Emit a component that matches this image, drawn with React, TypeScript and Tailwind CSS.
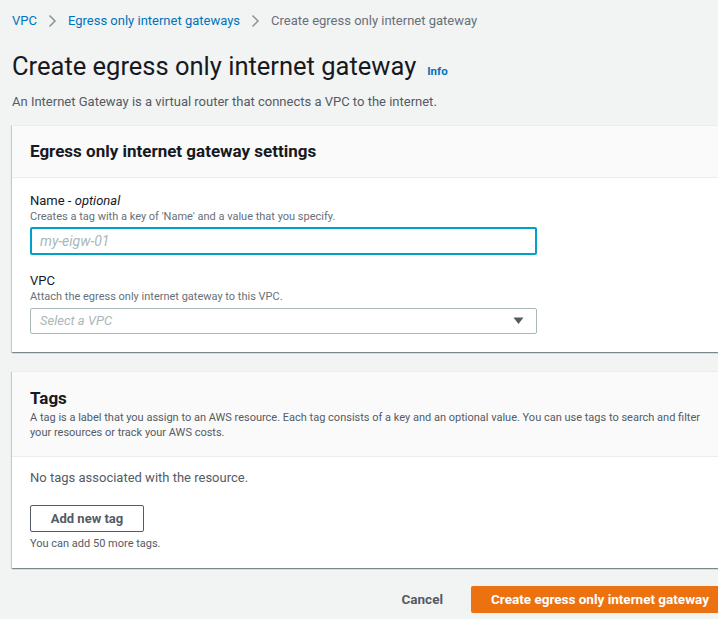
import React from 'react';

const font = { fontFamily: 'Roboto, "Liberation Sans", sans-serif' };

function Chevron() {
  return (
    <svg width="9" height="14" viewBox="0 0 9 14" className="mx-[11px] shrink-0">
      <path d="M1.5 1.5 L7 7 L1.5 12.5" fill="none" stroke="#879596" strokeWidth="1.5" />
    </svg>
  );
}

function Panel({ children, className = '' }: { children: React.ReactNode; className?: string }) {
  return (
    <div
      className={
        'bg-white border-t border-[#eaeded] shadow-[0_1px_1px_0_rgba(0,28,36,0.3),1px_1px_1px_0_rgba(0,28,36,0.15),-1px_1px_1px_0_rgba(0,28,36,0.15)] ' +
        className
      }
    >
      {children}
    </div>
  );
}

export default function App() {
  return (
    <div className="w-[718px] h-[619px] overflow-hidden bg-[#f2f3f3]" style={font}>
      <div className="w-[717px] ml-[12px]">
        {/* breadcrumb */}
        <nav className="flex items-center pt-[12px] text-[13px] leading-[18px]">
          <a className="text-[#0073bb]">VPC</a>
          <Chevron />
          <a className="text-[#0073bb]">Egress only internet gateways</a>
          <Chevron />
          <span className="text-[#687078]">Create egress only internet gateway</span>
        </nav>

        <div className="mt-[20px] flex items-baseline">
          <h1 className="text-[25.5px] leading-[32px] text-[#16191f]">
            Create egress only internet gateway
          </h1>
          <span className="ml-[11px] text-[11.5px] font-bold text-[#0073bb]">Info</span>
        </div>
        <p className="mt-[10px] text-[13px] leading-[20px] text-[#545b64]">
          An Internet Gateway is a virtual router that connects a VPC to the internet.
        </p>

        {/* settings */}
        <Panel className="mt-[13px]">
          <div className="h-[52px] flex items-center px-[18px] bg-[#fafafa] border-b border-[#eaeded]">
            <h2 className="text-[17px] font-bold text-[#16191f]">Egress only internet gateway settings</h2>
          </div>
          <div className="px-[18px] pt-[14px] pb-[18px]">
            <label className="block text-[13px] leading-[18px] text-[#16191f]">
              Name - <i>optional</i>
            </label>
            <div className="text-[11px] leading-[14px] text-[#687078]">
              Creates a tag with a key of 'Name' and a value that you specify.
            </div>
            <div className="mt-[3px] w-[507px] h-[28px] border-2 border-[#00a1c9] rounded-[2px] flex items-center px-[8px]">
              <span className="text-[14px] italic text-[#aab7b8]">my-eigw-01</span>
            </div>

            <label className="block mt-[17px] text-[13px] leading-[18px] text-[#16191f]">VPC</label>
            <div className="text-[11px] leading-[14px] text-[#687078]">
              Attach the egress only internet gateway to this VPC.
            </div>
            <div className="mt-[4px] w-[507px] h-[26px] border border-[#aab7b8] rounded-[2px] flex items-center justify-between pl-[9px] pr-[12px]">
              <span className="text-[13px] italic text-[#aab7b8]">Select a VPC</span>
              <svg width="11" height="8" viewBox="0 0 11 8">
                <path d="M0.5 0.5 H10.5 L5.5 7 Z" fill="#545b64" />
              </svg>
            </div>
          </div>
        </Panel>

        {/* tags */}
        <Panel className="mt-[19px]">
          <div className="px-[18px] pt-[15px] pb-[16px] bg-[#fafafa] border-b border-[#eaeded]">
            <h2 className="text-[17px] leading-[22px] font-bold text-[#16191f]">Tags</h2>
            <p className="mt-[1px] text-[11px] leading-[15px] text-[#545b64] pr-[10px]">
              A tag is a label that you assign to an AWS resource. Each tag consists of a key and an optional value. You
              can use tags to search and filter your resources or track your AWS costs.
            </p>
          </div>
          <div className="px-[18px] pt-[11px] pb-[16px]">
            <div className="text-[13px] leading-[20px] text-[#545b64]">No tags associated with the resource.</div>
            <button className="mt-[17px] w-[114px] h-[27px] border border-[#545b64] rounded-[2px] bg-white text-[13px] font-bold text-[#545b64]">
              Add new tag
            </button>
            <div className="mt-[4px] text-[11px] leading-[16px] text-[#545b64]">You can add 50 more tags.</div>
          </div>
        </Panel>

        {/* footer */}
        <div className="mt-[18px] flex items-center justify-end">
          <button className="text-[13.5px] font-bold text-[#545b64] mr-[28px]">Cancel</button>
          <button className="h-[27px] px-[20px] bg-[#ec7211] text-white text-[13.5px] font-bold rounded-[2px]">
            Create egress only internet gateway
          </button>
        </div>
      </div>
    </div>
  );
}
